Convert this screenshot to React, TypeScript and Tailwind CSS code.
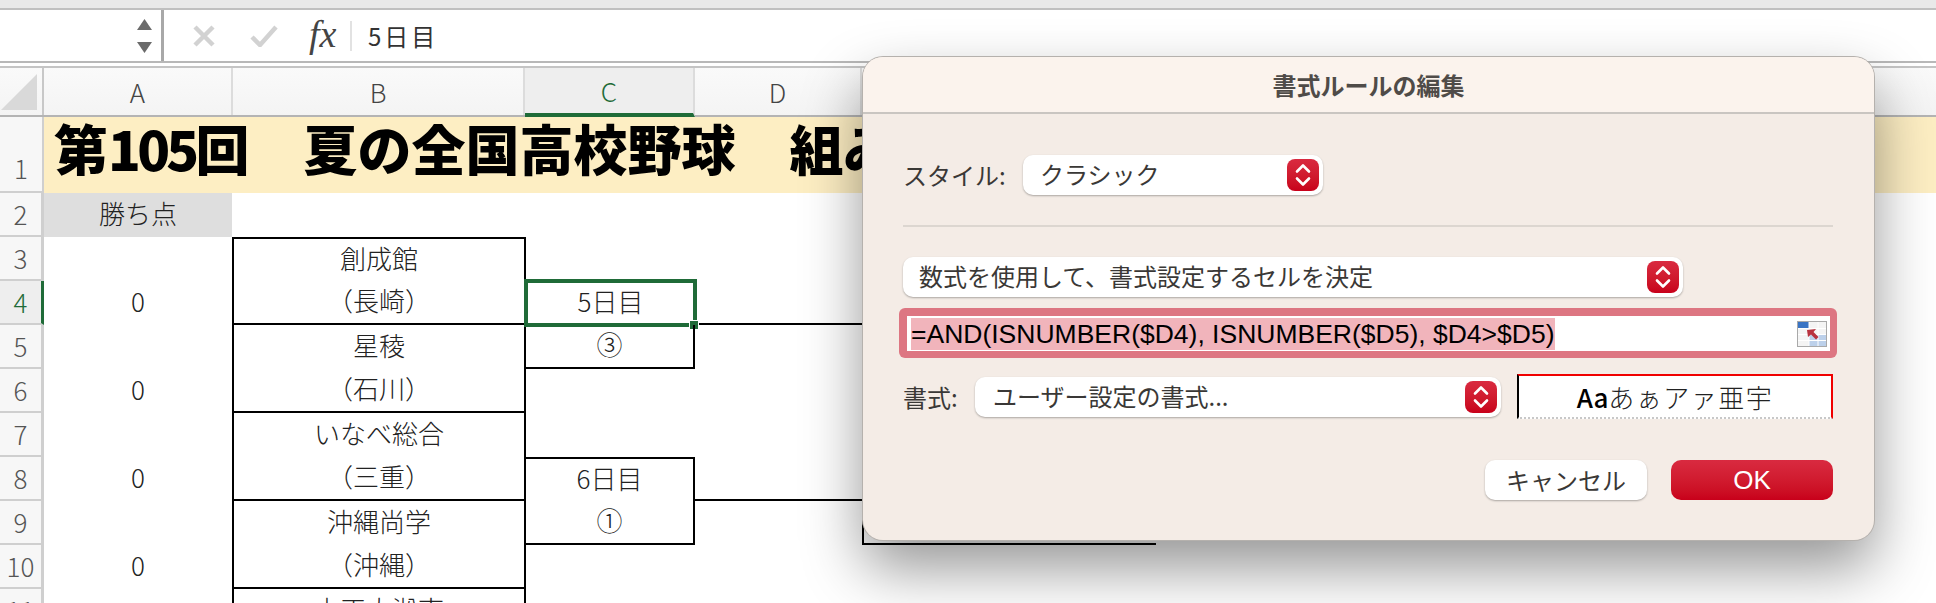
const jp = "font-['Noto_Sans_CJK_JP',sans-serif]";

const rows = [
  { n: '2', a: '勝ち点', b: '', c: '' },
  { n: '3', a: '', b: '創成館', c: '', top: true },
  { n: '4', a: '0', b: '（長崎）', c: '5日目', bottom: true, selected: true },
  { n: '5', a: '', b: '星稜', c: '③', boxC: true, bottomC: true },
  { n: '6', a: '0', b: '（石川）', c: '', bottom: true },
  { n: '7', a: '', b: 'いなべ総合', c: '' },
  { n: '8', a: '0', b: '（三重）', c: '6日目', bottom: true, boxC: true },
  { n: '9', a: '', b: '沖縄尚学', c: '①', boxC: true, bottomC: true },
  { n: '10', a: '0', b: '（沖縄）', c: '', bottom: true },
  { n: '11', a: '', b: '立正大淞南', c: '' },
];

function Chevrons() {
  return (
    <div className="w-8 h-8 rounded-lg bg-linear-to-b from-[#d92a40] to-[#c8001a] flex items-center justify-center shrink-0">
      <svg width="18" height="26" viewBox="0 0 18 26" fill="none" stroke="white" strokeWidth="2.6" strokeLinecap="round" strokeLinejoin="round">
        <path d="M3 9.5 9 3.5l6 6" />
        <path d="M3 16.5l6 6 6-6" />
      </svg>
    </div>
  );
}

function SelectBox({ label, className }: { label: string; className: string }) {
  return (
    <div className={`h-10 bg-white rounded-[10px] flex items-center justify-between pr-1 shadow-[0_1px_2px_rgba(0,0,0,0.3)] ${className}`}>
      <span className="text-[24px] leading-none text-[#3a3836] -mt-[3px]">{label}</span>
      <Chevrons />
    </div>
  );
}

function RangeIcon() {
  return (
    <svg width="30" height="26" viewBox="0 0 30 26" className="shrink-0">
      <rect width="30" height="26" fill="#f4f4f4" />
      <rect x="0" y="0" width="12" height="7" fill="#3a74c4" />
      <rect x="12" y="13" width="18" height="13" fill="#bcd0ea" />
      <path d="M0 7.5h30M0 13.5h30M0 19.5h30M12 0v26M21 0v26" stroke="#ffffff" strokeWidth="1" />
      <path d="M10 9l9-1-2.5 3 5 5-2.5 2.5-5-5-3 2.5z" fill="#b8323f" />
      <rect x="0.5" y="0.5" width="29" height="25" fill="none" stroke="#a9a9a9" />
    </svg>
  );
}

function Dialog() {
  return (
    <div className={`absolute left-[863px] top-[57px] w-[1011px] h-[483px] rounded-[20px] bg-[#f4ece6] overflow-hidden shadow-[0_0_0_1px_#b5b1ad,0_28px_60px_rgba(0,0,0,0.42)] ${jp}`}>
      <div className="h-[57px] bg-[#fbf3ed] border-b-2 border-[#c9c5c1] flex items-center justify-center text-[24px] font-bold text-[#4f4b48]">
        書式ルールの編集
      </div>
      <div className="pl-10 pr-[41px] pt-[41px]">
        <div className="flex items-center">
          <span className="w-[120px] text-[24px] leading-none text-[#3a3836]">スタイル:</span>
          <SelectBox label="クラシック" className="w-[300px] pl-[17px]" />
        </div>
        <div className="h-0.5 bg-[#dcd6d0] mt-[30px]"></div>
        <SelectBox label="数式を使用して、書式設定するセルを決定" className="w-[780px] pl-4 mt-[30px]" />
        <div className="-mx-1 mt-[11px] h-[50px] rounded-md bg-[#dd7682] p-2 pr-[7px] pb-[7px]">
          <div className="h-full bg-white flex items-center justify-between pl-1 pr-[3px]">
            <span className="font-['Liberation_Sans',sans-serif] text-[26.5px] leading-8 h-8 bg-[#f1b4bb] text-black whitespace-nowrap">
              =AND(ISNUMBER($D4), ISNUMBER($D5), $D4&gt;$D5)
            </span>
            <RangeIcon />
          </div>
        </div>
        <div className="flex items-start mt-[19px]">
          <span className="w-[72px] h-10 flex items-center text-[24px] leading-none text-[#3a3836]">書式:</span>
          <SelectBox label="ユーザー設定の書式..." className="w-[526px] pl-[18px]" />
          <div className="ml-4 -mt-[3px] w-[316px] h-[45px] bg-white border-t-2 border-t-[#f00000] border-r-2 border-r-[#f00000] border-l-2 border-l-black border-b-2 border-b-[#c8c8c8] border-dotted flex items-center justify-center text-[26px] leading-none text-[#222] [border-top-style:solid] [border-left-style:solid] [border-right-style:solid]">
            <span className="font-medium text-black">Aa</span>
            <span className="font-light tracking-[1.5px]">あぁアァ亜宇</span>
          </div>
        </div>
        <div className="flex justify-end gap-6 mt-[41px]">
          <div className="w-[162px] h-10 rounded-[10px] bg-white shadow-[0_1px_2px_rgba(0,0,0,0.3)] flex items-center justify-center text-[24px] leading-none text-[#3a3836]">
            キャンセル
          </div>
          <div className="w-[162px] h-10 rounded-[10px] bg-linear-to-b from-[#d92a40] to-[#c8001a] flex items-center justify-center text-[26px] leading-none text-white font-['Liberation_Sans',sans-serif]">
            OK
          </div>
        </div>
      </div>
    </div>
  );
}

function FormulaBar() {
  return (
    <div className="h-[63px] shrink-0">
      <div className="h-2 bg-[#e9e9e9]"></div>
      <div className="h-[55px] bg-white border-y-2 border-t-[#c0c0c0] border-b-[#b8b8b8] flex">
        <div className="w-[164px] border-r-[3px] border-[#a8a8a8] flex flex-col items-end justify-center gap-[12px] pr-[9px]">
          <svg width="15" height="11" viewBox="0 0 15 11"><path d="M7.5 0 15 11H0z" fill="#6b6b6b" /></svg>
          <svg width="15" height="11" viewBox="0 0 15 11"><path d="M7.5 11 15 0H0z" fill="#6b6b6b" /></svg>
        </div>
        <div className="flex-1 flex items-center pl-[29px]">
          <svg width="22" height="22" viewBox="0 0 22 22" fill="none" stroke="#d2d2d2" strokeWidth="4.5">
            <path d="M2 2l18 18M20 2 2 20" />
          </svg>
          <svg width="28" height="22" viewBox="0 0 28 22" fill="none" stroke="#d2d2d2" strokeWidth="4.5" className="ml-[35px]">
            <path d="M2 12l8 8L26 2" />
          </svg>
          <span className="ml-[31px] w-[35px] font-['Liberation_Serif',serif] italic text-[38px] leading-none text-[#444] -mt-1">fx</span>
          <div className="ml-[6px] w-0.5 h-[30px] bg-[#e2e2e2]"></div>
          <span className={`ml-4 text-[24px] leading-none text-[#333] tracking-[3px] ${jp}`}>5日目</span>
        </div>
      </div>
    </div>
  );
}

function ColumnHeaders() {
  const cols = [
    { l: 'A', w: 'w-[189px]' },
    { l: 'B', w: 'w-[292px]' },
    { l: 'C', w: 'w-[170px]', active: true },
    { l: 'D', w: 'w-[167px]' },
  ];
  return (
    <div className="h-[51px] mt-[3px] border-t-2 border-b-2 border-t-[#c4c4c4] border-b-[#b4b4b4] flex bg-linear-to-b from-[#fafafa] to-[#f4f4f4] shrink-0">
      <div className="w-[44px] border-r-2 border-[#c8c8c8] flex items-center justify-center shrink-0">
        <svg width="36" height="36" viewBox="0 0 36 36" className="-ml-[4px]"><path d="M36 0v36H0z" fill="#d9d9d9" /></svg>
      </div>
      {cols.map(c => (
        <div
          key={c.l}
          className={`${c.w} shrink-0 flex items-center justify-center border-r-2 border-[#dcdcdc] text-[26px] font-light ${jp} ${c.active ? 'bg-[#eeeeee] text-[#1f6b38] border-b-4 border-b-[#1f6b38] -mb-0.5' : 'text-[#444]'}`}
        >
          {c.l}
        </div>
      ))}
    </div>
  );
}

export default function App() {
  return (
    <div className={`relative w-[1936px] h-[603px] overflow-hidden bg-white flex flex-col ${jp}`}>
      <FormulaBar />
      <ColumnHeaders />

      <div className="flex h-[76px] shrink-0">
        <div className="w-[44px] shrink-0 bg-[#f7f7f7] border-r-2 border-b-2 border-[#cfcfcf] flex items-end justify-center pb-[10px] text-[26px] leading-none font-light text-[#555]">1</div>
        <div className="flex-1 bg-[#fdeec3] pl-[10px] text-[54px] leading-[62px] font-black text-black whitespace-nowrap">
          第<span className="tracking-[-3.7px]">105</span>回　夏の全国高校野球　組み合わせ
        </div>
      </div>

      {rows.map(r => (
        <div key={r.n} className="flex h-11 shrink-0">
          <div className={`w-[44px] shrink-0 border-r-[3px] border-b-2 flex items-center justify-center text-[26px] leading-none font-light ${r.selected ? 'bg-[#eeeeee] text-[#1f6b38] border-r-[#1f6b38] border-b-[#cfcfcf]' : 'bg-[#f7f7f7] text-[#555] border-[#cfcfcf]'}`}>
            {r.n}
          </div>
          <div className={`w-[188px] shrink-0 flex items-center justify-center pb-1 text-[26px] leading-none font-light text-[#222] ${r.n === '2' ? 'bg-[#dedede]' : ''}`}>
            {r.a}
          </div>
          {r.n === '2' ? (
            <div className="w-[294px] shrink-0"></div>
          ) : (
            <div className={`w-[294px] shrink-0 flex items-center justify-center pb-1 border-x-2 border-black text-[26px] leading-none font-light text-[#222] whitespace-nowrap ${r.top ? 'border-t-2' : ''} ${r.bottom ? 'border-b-2' : ''}`}>
              {r.b}
            </div>
          )}
          <div className={`relative w-[169px] shrink-0 flex items-center justify-center pb-1 text-[26px] leading-none font-light text-[#222] border-black ${r.boxC ? 'border-r-2' : ''} ${r.bottomC ? 'border-b-2' : ''} ${r.n === '8' ? 'border-t-2' : ''}`}>
            {r.c}
            {r.selected && (
              <>
                <div className="absolute -left-0.5 -top-0.5 -right-0.5 -bottom-0.5 border-4 border-[#1f6b38]"></div>
                <div className="absolute -right-[4px] -bottom-[5px] w-[10px] h-[10px] bg-[#1f6b38] border border-white"></div>
              </>
            )}
          </div>
          <div className={`w-[167px] shrink-0 border-black ${r.bottom && r.n !== '6' && r.n !== '10' ? 'border-b-2' : ''}`}></div>
          <div className={`w-[294px] shrink-0 border-black ${['4', '5', '8', '9'].includes(r.n) ? 'border-l-2' : ''} ${r.n === '9' ? 'border-b-2' : ''}`}></div>
        </div>
      ))}

      <Dialog />
    </div>
  );
}
